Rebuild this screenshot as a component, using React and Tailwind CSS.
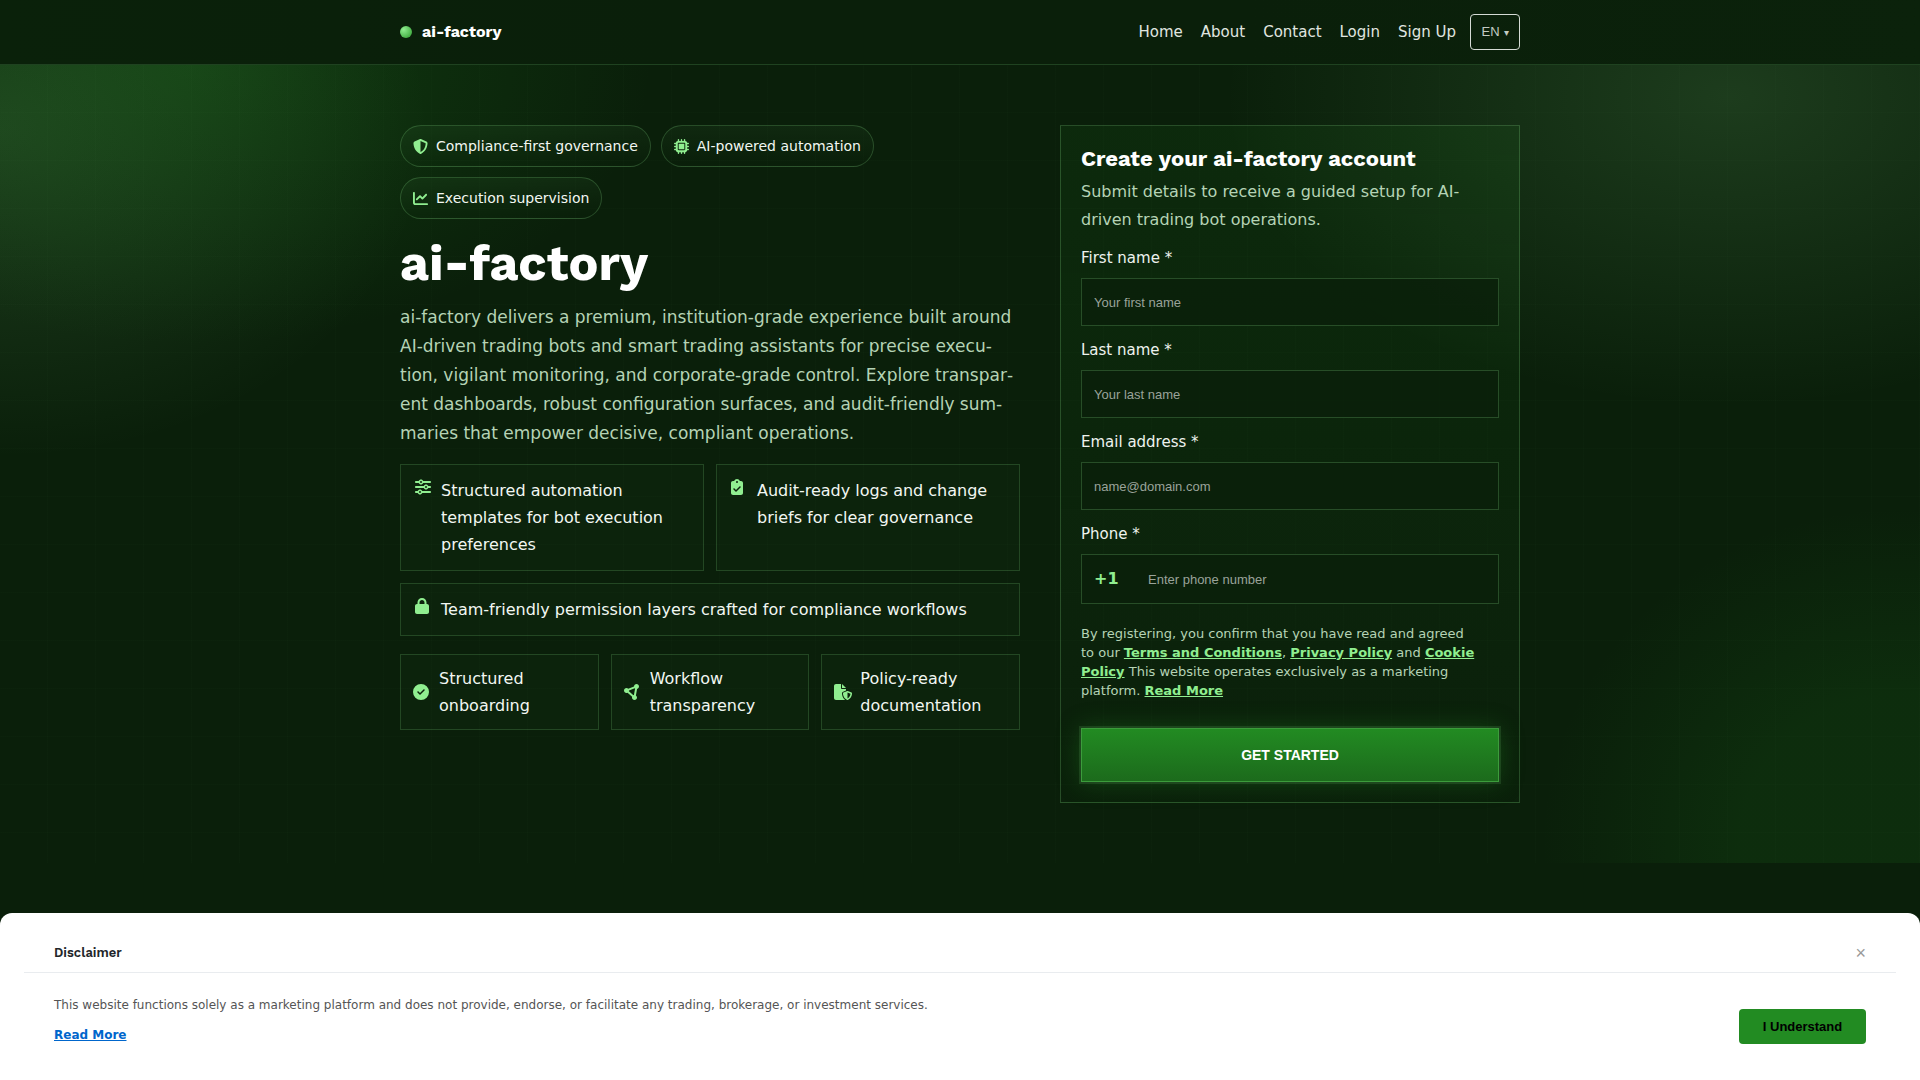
import {
  FaChartLine,
  FaCircleCheck,
  FaCircleNodes,
  FaClipboardCheck,
  FaFileShield,
  FaLock,
  FaMicrochip,
  FaShieldHalved,
  FaSliders,
} from "react-icons/fa6";

const heading = "font-['Work_Sans','Inter',sans-serif]";

const chips = [
  { icon: FaShieldHalved, label: "Compliance-first governance" },
  { icon: FaMicrochip, label: "AI-powered automation" },
  { icon: FaChartLine, label: "Execution supervision" },
];

const features = [
  { icon: FaSliders, label: "Structured automation templates for bot execution preferences", wide: false },
  { icon: FaClipboardCheck, label: "Audit-ready logs and change briefs for clear governance", wide: false },
  { icon: FaLock, label: "Team-friendly permission layers crafted for compliance workflows", wide: true },
];

const badges = [
  { icon: FaCircleCheck, label: "Structured onboarding" },
  { icon: FaCircleNodes, label: "Workflow transparency" },
  { icon: FaFileShield, label: "Policy-ready documentation" },
];

const fields = [
  { id: "first", label: "First name *", placeholder: "Your first name", type: "text" },
  { id: "last", label: "Last name *", placeholder: "Your last name", type: "text" },
  { id: "email", label: "Email address *", placeholder: "name@domain.com", type: "email" },
];

function Header() {
  return (
    <header className="border-b border-[#1f4220] bg-[linear-gradient(90deg,#0a210a,#0a1f0a_35%,#0a1f0a_65%,#0b220b)]">
      <div className="mx-auto flex h-16 max-w-[1120px] items-center justify-between">
        <a href="#" className="flex items-center gap-2.5">
          <span className="size-3 rounded-full bg-[radial-gradient(circle_at_30%_30%,#90ee90,#2c9a2c)]" />
          <span className={`${heading} text-base font-bold text-white`}>ai-factory</span>
        </a>
        <nav className="flex items-center gap-[18px] text-[15px] text-[#e0e6e0]">
          <a href="#">Home</a>
          <a href="#">About</a>
          <a href="#">Contact</a>
          <a href="#">Login</a>
          <a href="#">Sign Up</a>
          <button type="button" className="-ml-1 flex h-9 w-[50px] items-center justify-center gap-1 rounded border border-[#d5dbd5] font-['Liberation_Sans',sans-serif] text-[13px] text-[#c3cbc3]">
            EN <span className="text-[10px]">▾</span>
          </button>
        </nav>
      </div>
    </header>
  );
}

function Intro() {
  return (
    <div>
      <ul className="flex flex-wrap gap-2.5">
        {chips.map(({ icon: Icon, label }) => (
          <li key={label} className="flex h-[42px] items-center gap-2 rounded-full border border-[#90ee90]/22 bg-gradient-to-b from-[#90ee90]/[0.05] to-transparent px-3 text-[14px] text-[#f2f7f2]">
            <Icon className="size-[15px] text-[#90ee90]" />
            {label}
          </li>
        ))}
      </ul>
      <h1 className={`${heading} mt-3 text-[50px] leading-[64px] font-bold text-white`}>ai-factory</h1>
      <p lang="en" className="mt-2 text-[17px] leading-[29px] text-[#b5d3b5]">
        ai-factory delivers a premium, institution-grade experience built around AI-driven trading bots and smart trading assistants for precise execu&shy;tion, vigilant monitoring, and corporate-grade control. Explore transpar&shy;ent dashboards, robust configuration surfaces, and audit-friendly sum&shy;maries that empower decisive, compliant operations.
      </p>
      <ul className="mt-4 grid grid-cols-2 gap-3 text-[#f2f7f2]">
        {features.map(({ icon: Icon, label, wide }) => (
          <li key={label} className={`${wide ? "col-span-2" : ""} flex gap-2.5 border border-[#90ee90]/18 bg-[#90ee90]/[0.02] px-3.5 py-3 leading-[27px]`}>
            <Icon preserveAspectRatio="xMinYMid" className="mt-0.5 size-4 shrink-0 text-[#90ee90]" />
            {label}
          </li>
        ))}
      </ul>
      <ul className="mt-[18px] grid grid-cols-3 gap-3 text-[#f2f7f2]">
        {badges.map(({ icon: Icon, label }) => (
          <li key={label} className="flex items-center gap-2 border border-[#90ee90]/18 bg-[#90ee90]/[0.02] px-3 py-2.5 leading-[27px]">
            <Icon preserveAspectRatio="xMinYMid" className="h-4 w-[18px] shrink-0 text-[#90ee90]" />
            {label}
          </li>
        ))}
      </ul>
    </div>
  );
}

function SignupForm() {
  const link = "font-bold text-[#90ee90] underline";
  return (
    <form className="border border-[#90ee90]/22 bg-gradient-to-b from-[#228b22]/[0.1] to-[#228b22]/[0.01] p-5">
      <h2 className={`${heading} text-[22px] leading-[26px] font-bold text-white`}>Create your ai-factory account</h2>
      <p className="mt-1.5 leading-7 text-[#b5d3b5]">Submit details to receive a guided setup for AI-driven trading bot operations.</p>
      {fields.map((f) => (
        <div key={f.id} className="mt-3">
          <label htmlFor={f.id} className="block text-[15px] leading-6 text-[#eef3ee]">{f.label}</label>
          <input id={f.id} type={f.type} placeholder={f.placeholder} className="mt-2 h-12 w-full border border-[#90ee90]/22 bg-[#0a1f0a]/80 px-3 font-['Liberation_Sans',sans-serif] text-[13px] text-white placeholder:text-[#9aa39a]" />
        </div>
      ))}
      <div className="mt-3">
        <label htmlFor="phone" className="block text-[15px] leading-6 text-[#eef3ee]">Phone *</label>
        <div className="mt-2 flex h-[50px] items-center border border-[#90ee90]/22 bg-[#0a1f0a]/80">
          <span className="w-[66px] pl-3 font-bold text-[#90ee90]">+1</span>
          <input id="phone" type="tel" placeholder="Enter phone number" className="h-full min-w-0 flex-1 bg-transparent font-['Liberation_Sans',sans-serif] text-[13px] text-white placeholder:text-[#9aa39a]" />
        </div>
      </div>
      <p className="mt-5 text-[13px] leading-[19px] text-[#b5d3b5]">
        By registering, you confirm that you have read and agreed
        <br />
        to our <a href="#" className={link}>Terms and Conditions</a>, <a href="#" className={link}>Privacy Policy</a> and <a href="#" className={link}>Cookie<br />Policy</a> This website operates exclusively as a marketing
        <br />
        platform. <a href="#" className={link}>Read More</a>
      </p>
      <button type="button" className="mt-7 h-[54px] w-full border border-[#3c9c3c] bg-gradient-to-b from-[#228b22] to-[#1c6b1c] font-['Liberation_Sans',sans-serif] text-[14px] font-bold text-white shadow-[0_0_0_2px_rgba(144,238,144,0.12),0_0_24px_rgba(34,139,34,0.35)]">
        GET STARTED
      </button>
    </form>
  );
}

function Disclaimer() {
  return (
    <section aria-label="Disclaimer" className="fixed inset-x-0 bottom-0 rounded-t-xl bg-white px-6 pt-5 pb-9">
      <div className="flex h-10 items-center justify-between border-b border-[#e9ecef] px-[30px]">
        <h2 className={`${heading} text-[13px] font-semibold text-[#212529]`}>Disclaimer</h2>
        <button type="button" aria-label="Close" className="font-['Liberation_Sans',sans-serif] text-lg text-[#999]">×</button>
      </div>
      <div className="flex items-end justify-between px-[30px] pt-[23px]">
        <div className="text-xs text-[#555]">
          <p className="leading-[18px]">This website functions solely as a marketing platform and does not provide, endorse, or facilitate any trading, brokerage, or investment services.</p>
          <a href="#" className="mt-3 block leading-[18px] font-bold text-[#0066cc] underline">Read More</a>
        </div>
        <button type="button" className="h-[35px] w-[127px] rounded bg-[#228b22] font-['Liberation_Sans',sans-serif] text-[13px] font-bold text-black">I Understand</button>
      </div>
    </section>
  );
}

export default function App() {
  return (
    <div className="min-h-screen bg-[#0a1f0a] font-['DejaVu_Sans',sans-serif]">
      <Header />
      <main className="bg-[repeating-linear-gradient(90deg,transparent_0_47px,rgba(144,238,144,0.012)_47px_48px),repeating-linear-gradient(180deg,transparent_0_47px,rgba(144,238,144,0.012)_47px_48px),radial-gradient(460px_280px_at_10%_0%,rgba(34,139,34,0.27),transparent),radial-gradient(430px_330px_at_0%_8%,rgba(144,238,144,0.15),transparent),radial-gradient(505px_310px_at_90%_4%,rgba(144,238,144,0.14),transparent),radial-gradient(360px_340px_at_99%_98%,rgba(34,139,34,0.13)_45%,transparent)] pt-[60px] pb-[60px]">
        <div className="mx-auto grid max-w-[1120px] grid-cols-[620fr_460fr] items-start gap-10">
          <Intro />
          <SignupForm />
        </div>
      </main>
      <Disclaimer />
    </div>
  );
}
